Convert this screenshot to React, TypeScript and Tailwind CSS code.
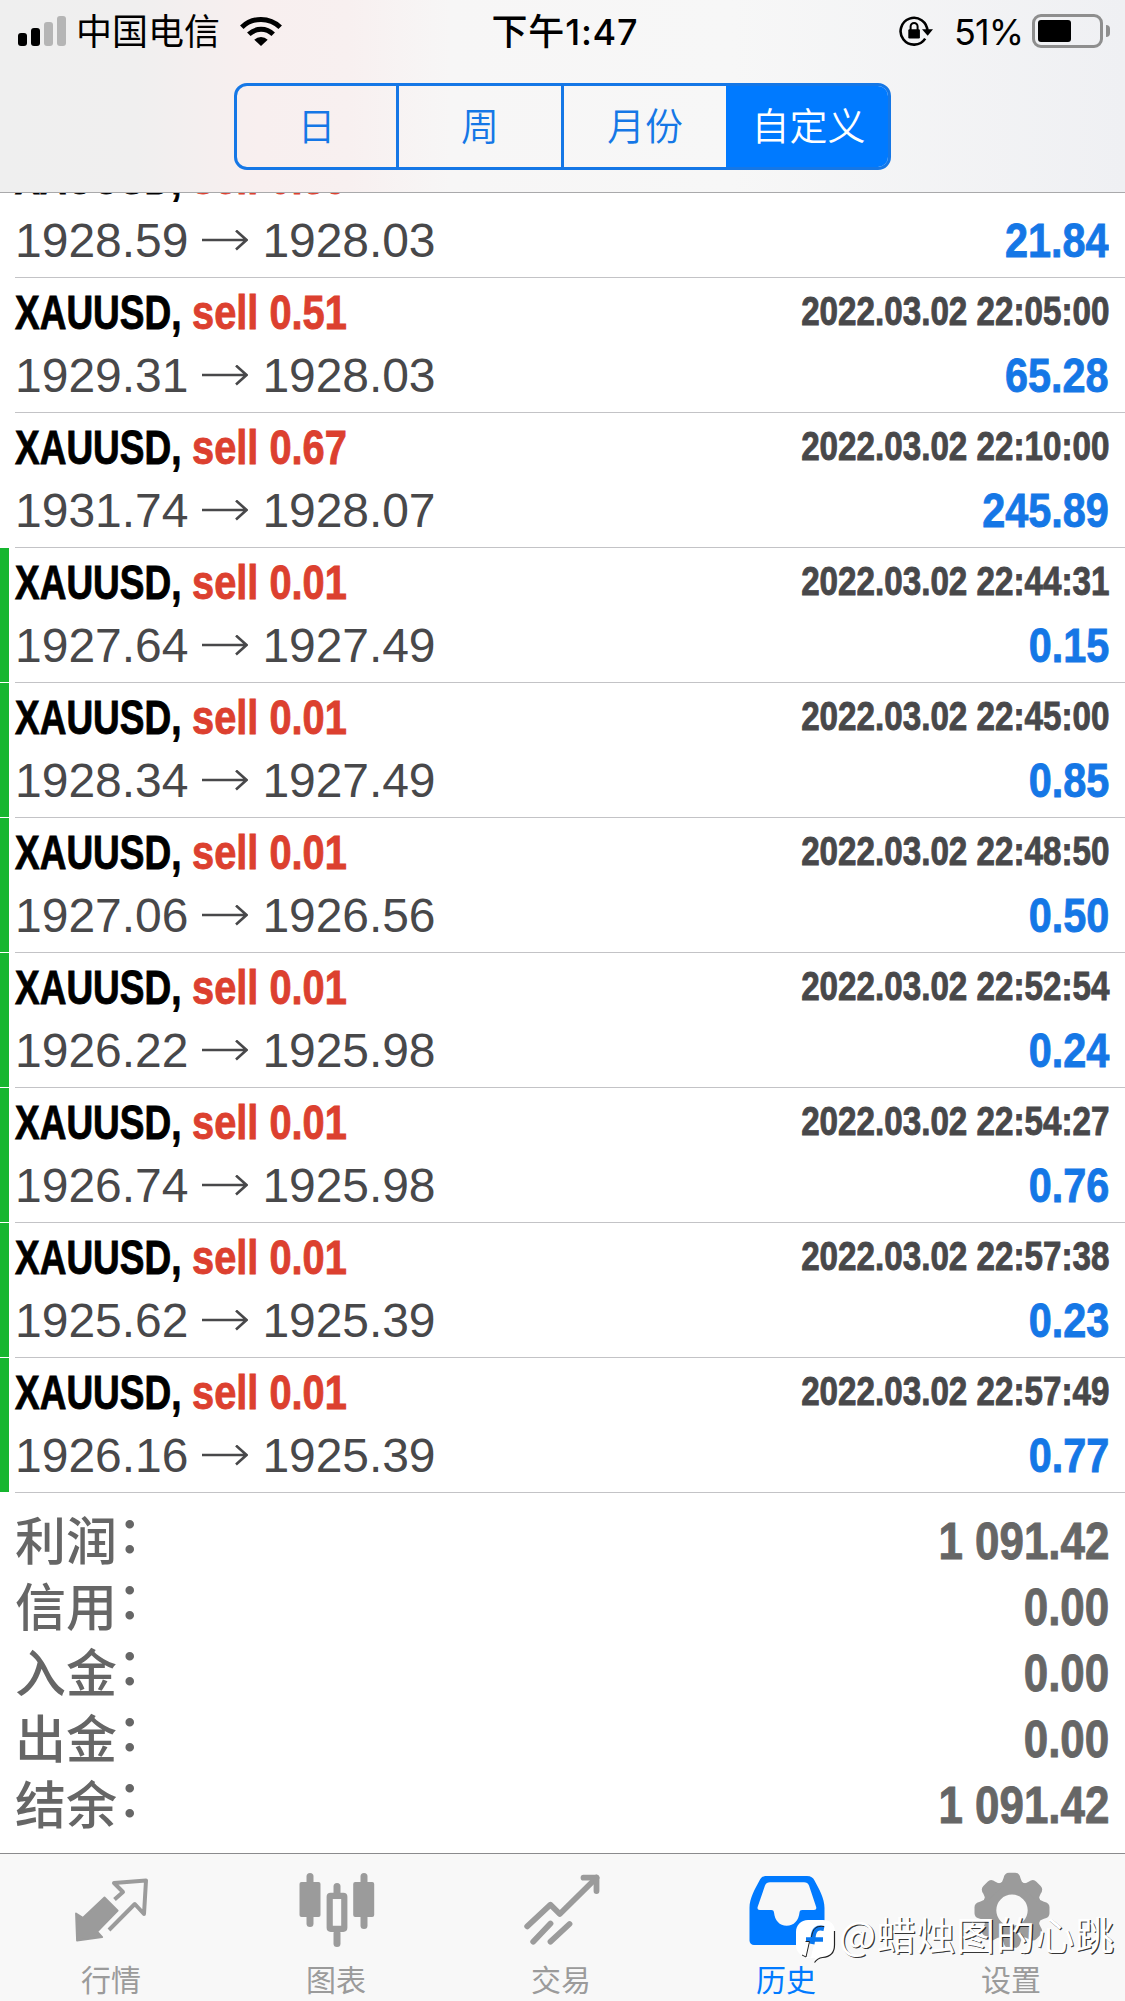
import React from 'react';
import clsx from 'clsx';

type Deal = {
  lots: string;
  open: string;
  close: string;
  time: string;
  profit: string;
  marked?: boolean;
};

const deals: Deal[] = [
  { lots: '0.39', open: '1928.59', close: '1928.03', time: '2022.03.02 22:00:00', profit: '21.84' },
  { lots: '0.51', open: '1929.31', close: '1928.03', time: '2022.03.02 22:05:00', profit: '65.28' },
  { lots: '0.67', open: '1931.74', close: '1928.07', time: '2022.03.02 22:10:00', profit: '245.89' },
  { lots: '0.01', open: '1927.64', close: '1927.49', time: '2022.03.02 22:44:31', profit: '0.15', marked: true },
  { lots: '0.01', open: '1928.34', close: '1927.49', time: '2022.03.02 22:45:00', profit: '0.85', marked: true },
  { lots: '0.01', open: '1927.06', close: '1926.56', time: '2022.03.02 22:48:50', profit: '0.50', marked: true },
  { lots: '0.01', open: '1926.22', close: '1925.98', time: '2022.03.02 22:52:54', profit: '0.24', marked: true },
  { lots: '0.01', open: '1926.74', close: '1925.98', time: '2022.03.02 22:54:27', profit: '0.76', marked: true },
  { lots: '0.01', open: '1925.62', close: '1925.39', time: '2022.03.02 22:57:38', profit: '0.23', marked: true },
  { lots: '0.01', open: '1926.16', close: '1925.39', time: '2022.03.02 22:57:49', profit: '0.77', marked: true },
];

const summary = [
  ['利润', '1 091.42'],
  ['信用', '0.00'],
  ['入金', '0.00'],
  ['出金', '0.00'],
  ['结余', '1 091.42'],
];

const periods = ['日', '周', '月份', '自定义'];

const SF = "font-['Inter','Noto_Sans_CJK_SC',sans-serif]";
const CJK = "font-['Noto_Sans_CJK_SC',sans-serif]";
const HEAVY = '[-webkit-text-stroke:0.9px_currentColor]';

const WifiIcon = () => (
  <svg viewBox="0 0 42 30" className="ml-5 h-[30px] w-[42px]">
    <g fill="none" stroke="#000" strokeWidth="5">
      <path d="M1.8 11.2a27.5 27.5 0 0 1 38.4 0" />
      <path d="M8.8 18.3a17.5 17.5 0 0 1 24.4 0" />
    </g>
    <path d="M14.3 23.8a9.5 9.5 0 0 1 13.4 0L21 30z" />
  </svg>
);

const RotationLockIcon = () => (
  <svg viewBox="0 0 34 30" className="mr-[-1px] h-[30px] w-[34px]">
    <path d="M26.2 22.6a13.4 13.4 0 1 1 2.2-7.6" fill="none" stroke="#000" strokeWidth="2.6" />
    <path d="M23 13.2h11l-5.3 6.6z" />
    <rect x="9.3" y="13.2" width="11.6" height="9.2" rx="1.2" />
    <path d="M11.6 14v-3.6a3.5 3.5 0 0 1 7 0V14" fill="none" stroke="#000" strokeWidth="2" />
  </svg>
);

const StatusBar = () => (
  <div className={clsx(SF, 'grid h-[60px] grid-cols-[1fr_auto_1fr] items-center text-black')}>
    <div className="flex items-center pl-[18px]">
      <div className="flex h-[30px] items-end gap-1">
        <i className="h-[13px] w-[9px] rounded-[3px] bg-black" />
        <i className="h-[18px] w-[9px] rounded-[3px] bg-black" />
        <i className="h-[24px] w-[9px] rounded-[3px] bg-[#b5b5b5]" />
        <i className="h-[30px] w-[9px] rounded-[3px] bg-[#b5b5b5]" />
      </div>
      <span className="ml-2.5 pt-0.5 text-[36px] leading-[60px]">中国电信</span>
      <WifiIcon />
    </div>
    <div className="ml-[5px] pt-px text-[36px] leading-[60px] font-medium tracking-[0.8px]">下午1:47</div>
    <div className="flex items-center justify-end pr-[15px]">
      <RotationLockIcon />
      <span className="ml-[22px] w-[78px] pt-0.5 text-[36px] leading-[60px] tracking-[-0.9px]">51%</span>
      <div className="h-[34px] w-[71px] rounded-[9px] border-[3px] border-[#8e8e8e] p-[3px]">
        <div className="h-full w-[33px] rounded-[3px] bg-black" />
      </div>
      <i className="ml-[3px] h-[12px] w-[4px] rounded-r-full bg-[#8e8e8e]" />
    </div>
  </div>
);

const Periods = () => (
  <div
    className={clsx(
      CJK,
      'mx-auto mt-[23px] grid h-[87px] w-[657px] grid-cols-[162px_165px_165px_1fr] overflow-hidden rounded-[13px] border-[3px] border-[#1577e6] text-[38px] text-[#1577e6]'
    )}
  >
    {periods.map((p, i) => (
      <button
        key={p}
        className={clsx(
          'pb-1.5 font-[350]',
          i === periods.length - 1 ? '-m-[3px] bg-[#007aff] text-white' : 'border-r-[3px] border-[#1577e6]'
        )}
      >
        {p}
      </button>
    ))}
  </div>
);

const Arrow = () => (
  <svg viewBox="0 0 46 22" className="ml-[13px] h-[22px] w-[46px]" fill="none" stroke="#48484a" strokeWidth="2.6">
    <path d="M0 10h44M34 .5L44.500 10 34 19.500" />
  </svg>
);

const DealRow = ({ deal }: { deal: Deal }) => (
  <li className="flex h-[135px]">
    <div className={clsx('mb-px w-[9px] shrink-0', deal.marked && 'bg-[#16b62f]')} />
    <div className="ml-[6px] flex-1 border-b border-[#c3c3c6] pt-[3px] pr-4 whitespace-nowrap">
      <div className={clsx(HEAVY, 'flex h-[63px] justify-between text-[49px] leading-[63px] font-bold')}>
        <div className="flex">
          <span className="w-[177px] origin-left scale-x-[.755] text-black">XAUUSD,</span>
          <span className="origin-left scale-x-[.812] text-[#dc402f]">sell {deal.lots}</span>
        </div>
        <span className="origin-right scale-x-[.83] text-[40px] leading-[61px] text-[#48484a]">{deal.time}</span>
      </div>
      <div className="flex h-[63px] justify-between text-[48px] leading-[63px] text-[#48484a]">
        <div className="flex items-center">
          {deal.open}
          <Arrow />
          <span className="ml-[15px] tracking-[-0.1px]">{deal.close}</span>
        </div>
        <span className={clsx(HEAVY, 'origin-right scale-x-[.845] text-[49px] font-bold text-[#1577e6]')}>
          {deal.profit}
        </span>
      </div>
    </div>
  </li>
);

const QuotesIcon = () => (
  <svg viewBox="0 0 80 80" className="size-20">
    <path
      d="M41.5 31.5l8.500-7.500-9-9L73 12.500l-2 33.500-9.200-10L36 62"
      fill="none"
      stroke="currentColor"
      strokeWidth="4"
      strokeLinejoin="round"
    />
    <path
      d="M3 45.400l6.800 4.400L31.500 29.500 44.700 42.700l-20.500 21 5 5.300L4 72.700z"
      fill="currentColor"
      stroke="currentColor"
      strokeWidth="1.8"
      strokeLinejoin="round"
    />
  </svg>
);

const ChartIcon = () => (
  <svg viewBox="0 0 80 80" className="size-20" fill="currentColor">
    <rect x="8.5" y="5" width="7" height="54" rx="3.5" />
    <rect x="1.5" y="14" width="21" height="35" rx="2" />
    <rect x="62.5" y="5" width="7" height="56" rx="3.5" />
    <rect x="55.2" y="14" width="21" height="35" rx="2" />
    <rect x="35.5" y="15" width="7" height="13" rx="3.5" />
    <rect x="35.5" y="62" width="7" height="17" rx="3.5" />
    <rect x="31.7" y="27.8" width="14.6" height="33" rx="1" fill="none" stroke="currentColor" strokeWidth="6.2" />
  </svg>
);

const TradeIcon = () => (
  <svg
    viewBox="0 0 80 80"
    className="size-20"
    fill="none"
    stroke="currentColor"
    strokeWidth="5.8"
    strokeLinecap="round"
    strokeLinejoin="round"
  >
    <path d="M4.200 58.300L27.500 36.700l9.300 9.300L73.500 9.700" />
    <path d="M60.500 9.700h13V23" />
    <path d="M27.500 55.500L10.200 73.700M46.500 56L27.500 73.700" />
  </svg>
);

const HistoryIcon = () => (
  <svg viewBox="0 0 80 80" className="size-20" fill="currentColor">
    <path
      fillRule="evenodd"
      d="M19 8h40c4 0 6 1.500 7.500 4.500C71 21 76.500 30 76.500 40v32.500a4.500 4.500 0 0 1-4.500 4.500H6a4.500 4.500 0 0 1-4.500-4.500V40C1.500 30 7 21 11.500 12.500 13 9.500 15 8 19 8zM22 14.300c-2.500 0-4 1-5 3.200L9.800 38.500c-.8 2.300 0 3.500 2 3.500h11.500c1.700 0 2.500.8 2.700 2.500C26.800 52.500 31.500 57.700 38.700 57.700s12-5.200 12.800-13.200c.2-1.700 1-2.500 2.700-2.500H66c2 0 2.800-1.200 2-3.500L61 17.500c-1-2.200-2.500-3.200-5-3.200z"
    />
  </svg>
);

const SettingsIcon = () => (
  <svg viewBox="0 0 80 80" className="size-20" fill="currentColor">
    <g transform="translate(39 42.3)">
      <circle r="22.7" fill="none" stroke="currentColor" strokeWidth="14" />
      {[0, 45, 90, 135, 180, 225, 270, 315].map((deg) => (
        <path
          key={deg}
          transform={`rotate(${deg})`}
          d="M-12-26.500Q-9.500-28-8.500-32-7.500-37.500-3-37.500H3Q7.500-37.500 8.500-32 9.500-28 12-26.500L8-24H-8z"
        />
      ))}
    </g>
  </svg>
);

const tabs = [
  { label: '行情', icon: QuotesIcon },
  { label: '图表', icon: ChartIcon },
  { label: '交易', icon: TradeIcon },
  { label: '历史', icon: HistoryIcon, active: true },
  { label: '设置', icon: SettingsIcon },
];

const Watermark = () => (
  <div
    className={clsx(
      CJK,
      'absolute top-[52px] left-[795px] flex h-[54px] items-center text-[39px] leading-[54px] tracking-[0.7px] whitespace-nowrap text-white [text-shadow:1.2px_1.2px_0.5px_rgba(0,0,0,0.8)]'
    )}
  >
    <svg viewBox="0 0 42 46" className="mt-[17px] mr-[2px] h-[46px] w-[42px]">
      <path
        d="M13 1h15c7 0 12 4 12 12v13c0 8-5 13-12 13-4 0-5 1-9 5l1-5H11l-5-3C3 33 1 31 1 26V13C1 6 6 1 13 1z"
        fill="#fff"
      />
      <path d="M39.500 12v14c0 8-5 12-12 12.500-4 .5-6 2-8 5" fill="none" stroke="#222" strokeWidth="1.2" />
      <path d="M17 23l-3.500 15" fill="none" stroke="#f8f8f8" strokeWidth="5" />
      <path d="M29 9.500c-7-1.500-9.500 1-10.500 6L17 25" fill="none" stroke="#0a78f0" strokeWidth="5" />
      <path d="M11 20.500h17" fill="none" stroke="#0a78f0" strokeWidth="4.5" />
      <path d="M29 7.500c-8-1-11 2-12.500 10.500M10.500 22.500h4L11 38l-4-2" fill="none" stroke="#222" strokeWidth="1" />
    </svg>
    @蜡烛图的心跳
  </div>
);

export default function App() {
  return (
    <div className="flex h-[2001px] w-[1125px] flex-col overflow-hidden bg-white font-['Liberation_Sans',Arial,sans-serif]">
      <header className="relative z-10 h-[193px] shrink-0 border-b border-[#a9a9ab] bg-[linear-gradient(90deg,#efefef_0%,#f0efef_12%,#f8efef_23%,#f8f0f0_31%,#f7f6f6_40%,#f7f7f7_65%,#eff0f3_100%)]">
        <StatusBar />
        <Periods />
      </header>

      <ul className="-mt-[50px] shrink-0">
        {deals.map((deal) => (
          <DealRow key={deal.time} deal={deal} />
        ))}
      </ul>

      <dl className="flex-1 pt-[15px] pr-4 pl-[15px] font-bold text-[#666]">
        {summary.map(([label, value]) => (
          <div key={label} className="flex h-[66px] justify-between leading-[66px]">
            <dt className={clsx(CJK, '-mt-[3px] flex h-[66px] text-[51px] font-medium')}>
              {label}
              <span className="-mt-[7px]">：</span>
            </dt>
            <dd className={clsx(HEAVY, 'origin-right scale-x-[.845] text-[52px]')}>{value}</dd>
          </div>
        ))}
      </dl>

      <nav className="relative flex h-[148px] shrink-0 border-t border-[#8b8b8d] bg-[#f8f8f8]">
        {tabs.map(({ label, icon: Icon, active }) => (
          <button
            key={label}
            className={clsx(
              CJK,
              'flex flex-1 flex-col items-center pt-[14px] text-[30px] leading-[36px]',
              active ? 'text-[#007aff]' : 'text-[#9b9b9b]'
            )}
          >
            <Icon />
            <span className="mt-3 mr-[3px]">{label}</span>
          </button>
        ))}
        <Watermark />
      </nav>
    </div>
  );
}
